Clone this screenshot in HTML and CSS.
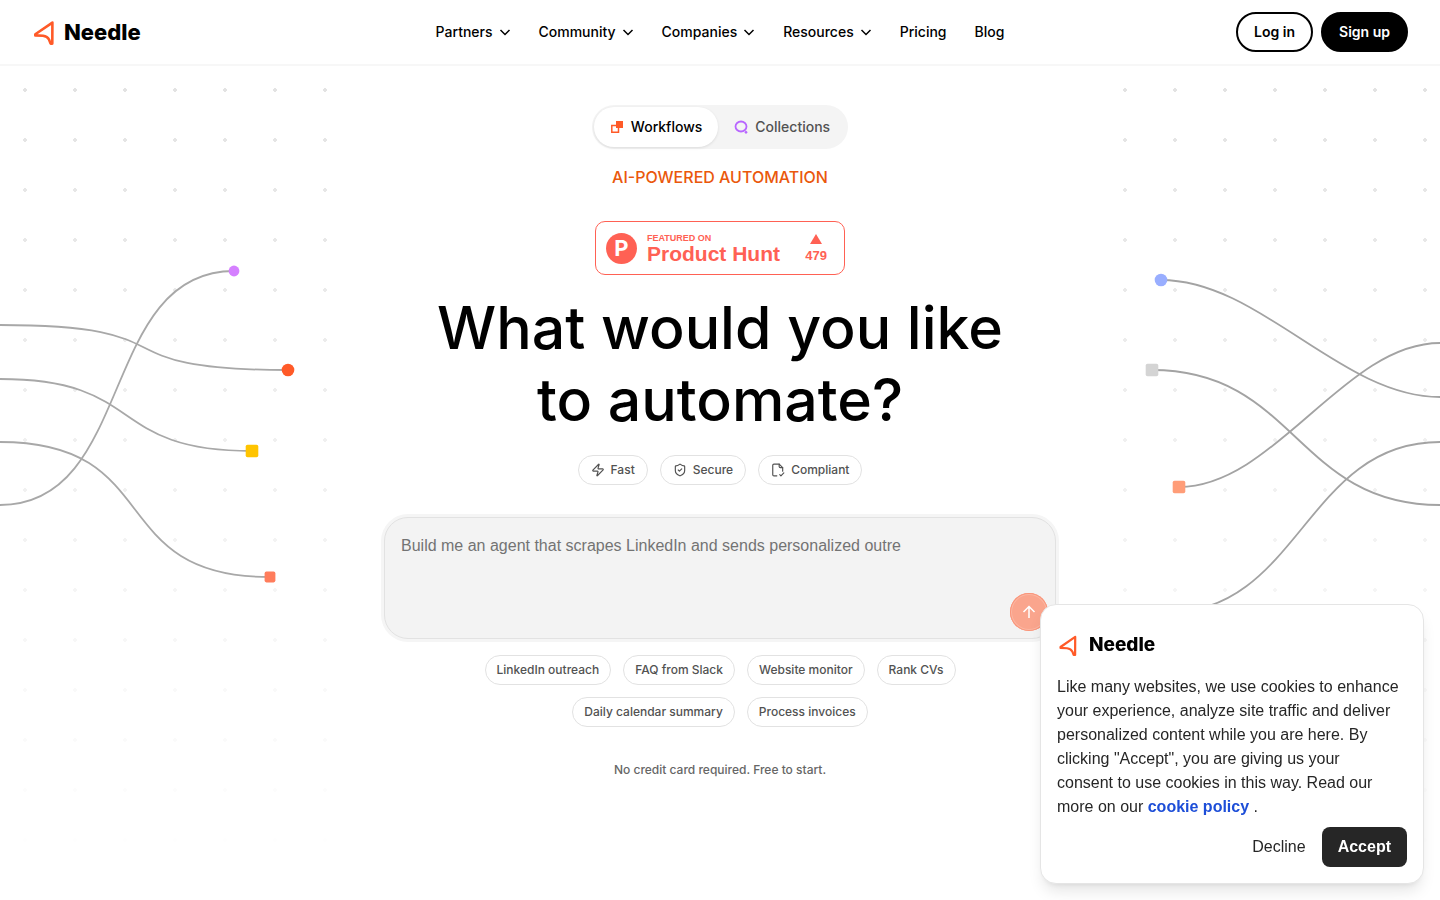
FILE: index.html
```html
<!DOCTYPE html>
<html lang="en">
<head>
    <meta charset="UTF-8">
    <meta name="viewport" content="width=device-width, initial-scale=1.0">
    <title>Needle</title>
    <link rel="stylesheet" href="styles.css">
</head>
<body>
    <header class="header">
        <a class="logo" href="#">
            <svg class="logo-mark" viewBox="0 0 24 28" fill="none" stroke="#ff5a28" stroke-width="2.600" stroke-linejoin="round" stroke-linecap="round"><path d="M20.400 4.600L3.300 16.300V17.400L11 17.800Q15.500 18.500 17 21.500L18.600 25.600H20.300Z"/></svg>
            <span>Needle</span>
        </a>
        <nav class="nav">
            <button type="button">Partners <svg class="chevron" viewBox="0 0 12 12"><path d="M1.500 4L6 8.500 10.500 4"/></svg></button>
            <button type="button">Community <svg class="chevron" viewBox="0 0 12 12"><path d="M1.500 4L6 8.500 10.500 4"/></svg></button>
            <button type="button">Companies <svg class="chevron" viewBox="0 0 12 12"><path d="M1.500 4L6 8.500 10.500 4"/></svg></button>
            <button type="button">Resources <svg class="chevron" viewBox="0 0 12 12"><path d="M1.500 4L6 8.500 10.500 4"/></svg></button>
            <a href="#">Pricing</a>
            <a href="#">Blog</a>
        </nav>
        <div class="account">
            <a class="btn btn-outline" href="#">Log in</a>
            <a class="btn btn-dark" href="#">Sign up</a>
        </div>
    </header>

    <main class="hero">
        <div class="dots dots-left"></div>
        <div class="dots dots-right"></div>
        <svg class="lines lines-left" viewBox="0 0 400 540" fill="none">
            <g stroke="#a8a8a8" stroke-width="2">
                <path d="M0 200C220 200 100 250 320 250"/>
                <path d="M0 260C163 260 117 340 280 340"/>
                <path d="M0 330C185 330 115 480 300 480"/>
                <path d="M0 400C150 400 110 140 260 140"/>
            </g>
            <circle cx="320" cy="250" r="7" fill="#ff5a28"/>
            <rect x="273" y="333" width="14" height="14" rx="2" fill="#ffc400"/>
            <rect x="294" y="474" width="12" height="12" rx="2" fill="#ff7d5c"/>
            <circle cx="260" cy="140" r="6" fill="#d580ff"/>
        </svg>
        <svg class="lines lines-right" viewBox="0 0 400 540" fill="none">
            <g stroke="#a3a3a3" stroke-width="2">
                <path d="M90 150C200 150 290 280 400 280"/>
                <path d="M80 250C240 250 240 400 400 400"/>
                <path d="M110 380C216 380 294 220 400 220"/>
                <path d="M95 520C245 520 250 330 400 330"/>
            </g>
            <circle cx="90" cy="150" r="7" fill="#99aeff"/>
            <rect x="73" y="243" width="14" height="14" rx="2" fill="#d4d4d4"/>
            <rect x="103" y="373" width="14" height="14" rx="2" fill="#ff9d78"/>
        </svg>

        <div class="tabs">
            <button type="button" class="tab active">
                <svg viewBox="0 0 14 14" width="14" height="14"><path d="M6 1h7v7H6z" fill="#ff5a28"/><path d="M6 5.500H1.800v6.700h6.700V8" fill="none" stroke="#ff5a28" stroke-width="1.500"/></svg>
                Workflows
            </button>
            <button type="button" class="tab">
                <svg viewBox="0 0 14 14" width="14" height="14"><ellipse cx="7" cy="6.500" rx="5.500" ry="5" fill="none" stroke="#b866ff" stroke-width="1.800"/><path d="M12 10.500l1.700 1.700L12 13.900l-1.700-1.700z" fill="#b866ff"/></svg>
                Collections
            </button>
        </div>
        <p class="eyebrow">AI-POWERED AUTOMATION</p>

        <a class="ph" href="#">
            <span class="ph-mark">P</span>
            <span class="ph-name"><small>FEATURED ON</small><b>Product Hunt</b></span>
            <span class="ph-votes"><svg viewBox="0 0 12 10" width="12" height="10"><path d="M6 0l6 10H0z" fill="#ff6154"/></svg>479</span>
        </a>

        <h1>What would you like<br>to automate?</h1>

        <ul class="features">
            <li><svg class="icon" viewBox="0 0 24 24"><path d="M4 14a1 1 0 0 1-.78-1.630l9.900-10.200a.5.5 0 0 1 .86.460l-1.920 6.020A1 1 0 0 0 13 10h7a1 1 0 0 1 .78 1.630l-9.900 10.200a.5.5 0 0 1-.86-.460l1.920-6.020A1 1 0 0 0 11 14z"/></svg>Fast</li>
            <li><svg class="icon" viewBox="0 0 24 24"><path d="M20 13c0 5-3.500 7.500-7.660 8.950a1 1 0 0 1-.67-.010C7.500 20.500 4 18 4 13V6a1 1 0 0 1 1-1c2 0 4.500-1.200 6.240-2.720a1.170 1.170 0 0 1 1.520 0C14.510 3.810 17 5 19 5a1 1 0 0 1 1 1z"/><path d="M9 12l2 2 4-4"/></svg>Secure</li>
            <li><svg class="icon" viewBox="0 0 24 24"><path d="M10 22H5a2 2 0 0 1-2-2V4a2 2 0 0 1 2-2h9l6 6v6"/><path d="M14 2v4a2 2 0 0 0 2 2h4"/><path d="M15 20l2 2 5-5"/></svg>Compliant</li>
        </ul>

        <form class="prompt">
            <textarea aria-label="Describe your automation" placeholder="Build me an agent that scrapes LinkedIn and sends personalized outre"></textarea>
            <button type="submit" class="send" aria-label="Send"><svg viewBox="0 0 16 16" width="16" height="16"><path d="M8 14V2.500M2.500 8L8 2.500 13.500 8"/></svg></button>
        </form>

        <div class="examples">
            <button type="button">LinkedIn outreach</button>
            <button type="button">FAQ from Slack</button>
            <button type="button">Website monitor</button>
            <button type="button">Rank CVs</button>
            <button type="button">Daily calendar summary</button>
            <button type="button">Process invoices</button>
        </div>
        <p class="note">No credit card required. Free to start.</p>
    </main>

    <aside class="cookie">
        <div class="logo cookie-logo">
            <svg class="logo-mark" viewBox="0 0 24 28" fill="none" stroke="#ff5a28" stroke-width="2.600" stroke-linejoin="round" stroke-linecap="round"><path d="M20.400 4.600L3.300 16.300V17.400L11 17.800Q15.500 18.500 17 21.500L18.600 25.600H20.300Z"/></svg>
            <span>Needle</span>
        </div>
        <p>Like many websites, we use cookies to enhance your experience, analyze site traffic and deliver personalized content while you are here. By clicking "Accept", you are giving us your<br>consent to use cookies in this way. Read our<br>more on our <a href="#">cookie policy</a> .</p>
        <div class="cookie-actions">
            <button type="button" class="decline">Decline</button>
            <button type="button" class="accept">Accept</button>
        </div>
    </aside>
</body>
</html>
```
FILE: styles.css
```css
* {
    box-sizing: border-box;
}
body {
    margin: 0;
    min-height: 100vh;
    background: #ffffff;
    color: #000000;
    font-family: Inter, "Liberation Sans", sans-serif;
    font-size: 16px;
    line-height: 24px;
}
button, textarea {
    font: inherit;
    color: inherit;
}
button {
    padding: 0;
    border: none;
    background: none;
    cursor: pointer;
}
a {
    color: inherit;
    text-decoration: none;
}

/* header */
.header {
    display: grid;
    grid-template-columns: 1fr auto 1fr;
    align-items: center;
    height: 66px;
    padding: 0 32px;
    border-bottom: 2px solid #f7f7f7;
}
.logo {
    display: flex;
    align-items: center;
    gap: 8px;
    font-size: 22px;
    font-weight: 800;
}
.logo-mark {
    width: 24px;
    height: 28px;
}
.nav {
    display: flex;
    gap: 28px;
    font-size: 14px;
    font-weight: 500;
}
.nav button {
    display: flex;
    align-items: center;
    gap: 6px;
}
.chevron {
    width: 12px;
    height: 12px;
    fill: none;
    stroke: #000000;
    stroke-width: 1.5;
}
.account {
    display: flex;
    justify-content: flex-end;
    gap: 8px;
}
.btn {
    height: 40px;
    padding: 0 16px;
    border: 2px solid #000000;
    border-radius: 20px;
    font-size: 14px;
    font-weight: 600;
    line-height: 36px;
}
.btn-dark {
    background: #000000;
    color: #ffffff;
}

/* hero */
.hero {
    position: relative;
    display: flex;
    flex-direction: column;
    align-items: center;
    padding: 39px 24px 110px;
    overflow: hidden;
}
.hero > * {
    position: relative;
}
.hero > .dots {
    position: absolute;
    top: -1px;
    height: 800px;
    background: radial-gradient(circle, #e2e2e2 2px, transparent 2px) 0 0 / 50px 50px;
    mask-image: linear-gradient(#000000, transparent);
}
.dots-left {
    left: 0;
    width: 350px;
}
.dots-right {
    right: 0;
    width: 340px;
}
.hero > .lines {
    position: absolute;
    top: 79px;
    width: 25%;
}
.lines-left {
    left: 0;
}
.lines-right {
    right: 0;
}
.tabs {
    display: flex;
    padding: 2px;
    border-radius: 22px;
    background: #f4f4f4;
}
.tab {
    display: flex;
    align-items: center;
    gap: 7px;
    height: 40px;
    padding: 0 16px;
    border-radius: 20px;
    color: #525252;
    font-size: 14px;
    font-weight: 500;
}
.tab.active {
    background: #ffffff;
    color: #000000;
    box-shadow: 0 1px 3px rgba(0, 0, 0, 0.1);
}
.eyebrow {
    margin: 16px 0 32px;
    color: #ea580c;
    font-weight: 500;
}
.ph {
    display: flex;
    align-items: center;
    width: 250px;
    height: 54px;
    padding: 0 17px 0 10px;
    border: 1px solid #ff6154;
    border-radius: 10px;
    color: #ff6154;
    font-family: "Liberation Sans", Arial, sans-serif;
    font-weight: 700;
}
.ph-mark {
    width: 31px;
    height: 31px;
    margin-right: 10px;
    border-radius: 50%;
    background: #ff6154;
    color: #ffffff;
    font-family: Inter, sans-serif;
    font-size: 22px;
    line-height: 31px;
    text-align: center;
}
.ph-name {
    display: flex;
    flex-direction: column;
    padding-top: 2px;
}
.ph-name small {
    font-size: 9px;
    line-height: 10px;
}
.ph-name b {
    font-size: 21px;
    line-height: 22px;
}
.ph-votes {
    display: flex;
    flex-direction: column;
    align-items: center;
    gap: 5px;
    margin-left: auto;
    font-size: 13px;
    line-height: 14px;
}
h1 {
    margin: 17px 0 19px;
    font-size: 59px;
    font-weight: 500;
    line-height: 72px;
    text-align: center;
}
.features, .examples {
    display: flex;
    flex-wrap: wrap;
    justify-content: center;
    gap: 12px;
    margin: 0;
    padding: 0;
    list-style: none;
}
.features li, .examples button {
    display: flex;
    align-items: center;
    gap: 6px;
    height: 30px;
    padding: 0 12px;
    border: 1px solid #e2e2e2;
    border-radius: 15px;
    background: #ffffff;
    color: #525252;
    font-size: 12px;
    font-weight: 500;
}
.icon {
    width: 14px;
    height: 14px;
    fill: none;
    stroke: #525252;
    stroke-width: 2;
    stroke-linecap: round;
    stroke-linejoin: round;
}
.prompt {
    width: 100%;
    max-width: 672px;
    margin: 32px 0 16px;
}
.prompt textarea {
    display: block;
    width: 100%;
    height: 122px;
    padding: 16px;
    border: 1px solid #e2e2e2;
    border-radius: 24px;
    background: #f3f3f3;
    box-shadow: 0 0 0 3px #f5f5f5;
    font-family: "Liberation Sans", Arial, sans-serif;
    resize: none;
    outline: none;
}
.prompt textarea::placeholder {
    color: #737373;
    opacity: 1;
}
.send {
    position: absolute;
    right: 8px;
    bottom: 8px;
    display: grid;
    place-items: center;
    width: 38px;
    height: 38px;
    border-radius: 50%;
    background: #faa58d;
    box-shadow: inset 0 0 0 1px #f99479, inset 0 0 0 2px #fbb6a2;
}
.send svg {
    fill: none;
    stroke: #ffffff;
    stroke-width: 1.5;
}
.examples {
    max-width: 500px;
}
.examples button {
    padding: 0 11px;
}
.note {
    margin: 31px 0 0;
    color: #666666;
    font-size: 12px;
    font-weight: 500;
}

/* cookie banner */
.cookie {
    position: fixed;
    right: 16px;
    bottom: 16px;
    width: 384px;
    padding: 28px 16px 16px;
    border: 1px solid #e5e5e5;
    border-radius: 16px;
    background: #ffffff;
    color: #262626;
    box-shadow: 0 10px 15px -3px rgba(0, 0, 0, 0.1), 0 4px 6px -4px rgba(0, 0, 0, 0.1);
    font-family: "Liberation Sans", Arial, sans-serif;
}
.cookie-logo {
    gap: 10px;
    color: #000000;
    font-family: Inter, sans-serif;
    font-size: 19px;
}
.cookie-logo .logo-mark {
    width: 22px;
    height: 24px;
}
.cookie p {
    margin: 18px 0 8px;
}
.cookie p a {
    color: #1d4ed8;
    font-weight: 700;
}
.cookie-actions {
    display: flex;
    justify-content: flex-end;
    gap: 16px;
}
.accept {
    height: 40px;
    padding: 0 16px;
    border-radius: 8px;
    background: #262626;
    color: #ffffff;
    font-weight: 700;
}
```
